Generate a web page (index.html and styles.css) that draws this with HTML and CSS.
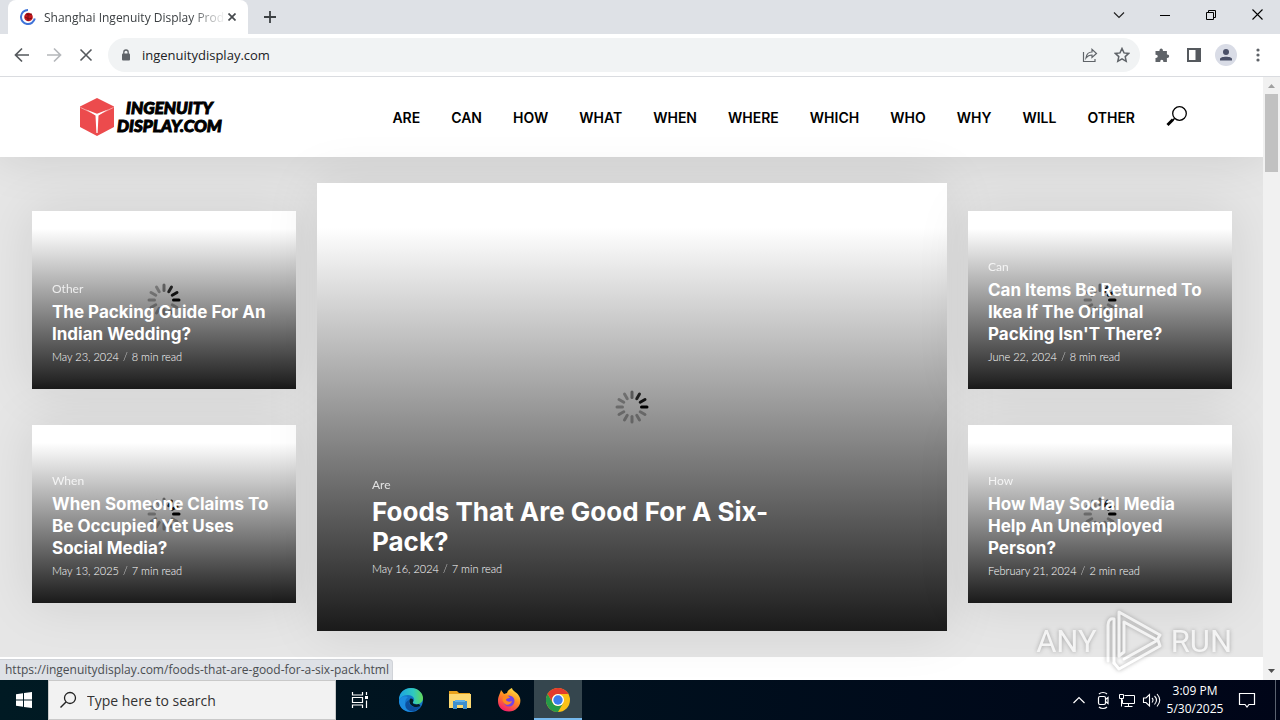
FILE: index.html
```
<!DOCTYPE html>
<html lang="en">
<head>
  <meta charset="UTF-8" />
  <meta name="viewport" content="width=device-width, initial-scale=1.0" />
  <title>Shanghai Ingenuity Display Products</title>
  <link rel="stylesheet" href="styles.css">
</head>
<body>
  <svg class="defs" aria-hidden="true">
    <symbol id="spinner" viewBox="-17 -17 34 34">
      <g stroke="#000" stroke-width="3" stroke-linecap="round">
        <path d="M9.500 0H15" />
        <path d="M9.500 0H15" transform="rotate(-30)" opacity=".9" />
        <path d="M9.500 0H15" transform="rotate(-60)" opacity=".8" />
        <path d="M9.500 0H15" transform="rotate(-90)" opacity=".45" />
        <g opacity=".3">
          <path d="M9.500 0H15" transform="rotate(-120)" />
          <path d="M9.500 0H15" transform="rotate(-150)" />
          <path d="M9.500 0H15" transform="rotate(180)" />
          <path d="M9.500 0H15" transform="rotate(150)" />
          <path d="M9.500 0H15" transform="rotate(120)" />
          <path d="M9.500 0H15" transform="rotate(90)" />
          <path d="M9.500 0H15" transform="rotate(60)" />
          <path d="M9.500 0H15" transform="rotate(30)" />
        </g>
      </g>
    </symbol>
  </svg>

  <div class="tabstrip">
    <div class="tab">
      <svg width="16" height="16" viewBox="0 0 16 16"><circle cx="8.500" cy="8" r="4.300" fill="#c4161c" /><path d="M6 5l3 1 3-1M5 8l4 2 3-1M8 4v8" stroke="#7a0d14" fill="none" /><path d="M8 1a7 7 0 1 0 6.800 8.600" fill="none" stroke="#3f73d8" stroke-width="2" /></svg>
      <span class="tab-title">Shanghai Ingenuity Display Prod</span>
      <button class="tab-close" aria-label="Close tab"><svg width="8" height="8" viewBox="0 0 8 8"><path d="M.500.500l7 7M7.500.500l-7 7" stroke="#45494d" stroke-width="1.700" /></svg></button>
    </div>
    <button class="new-tab" aria-label="New tab"><svg width="12" height="12" viewBox="0 0 12 12"><path d="M6 0v12M0 6h12" stroke="#3c4043" stroke-width="1.800" /></svg></button>
    <div class="win-buttons">
      <button aria-label="Search tabs"><svg width="12" height="8" viewBox="0 0 12 8"><path d="M1 1.500l5 5 5-5" fill="none" stroke="#222" stroke-width="1.200" /></svg></button>
      <button aria-label="Minimize"><svg width="10" height="10" viewBox="0 0 10 10"><path d="M0 5.500h10" stroke="#000" /></svg></button>
      <button aria-label="Restore"><svg width="10" height="10" viewBox="0 0 10 10"><path d="M.500 2.500h7v7h-7zM2.500 2.500v-2h7v7h-2" fill="none" stroke="#000" /></svg></button>
      <button aria-label="Close"><svg width="11" height="11" viewBox="0 0 11 11"><path d="M.500.500l10 10M10.500.500l-10 10" stroke="#000" stroke-width="1.100" /></svg></button>
    </div>
  </div>

  <div class="toolbar">
    <button aria-label="Back"><svg width="16" height="16" viewBox="0 0 16 16"><path d="M15 8H2M8 1.500L1.500 8 8 14.500" fill="none" stroke="#55595d" stroke-width="1.700" /></svg></button>
    <button aria-label="Forward"><svg width="16" height="16" viewBox="0 0 16 16"><path d="M1 8h13M8 1.500L14.500 8 8 14.500" fill="none" stroke="#b5b8bb" stroke-width="1.700" /></svg></button>
    <button aria-label="Stop"><svg width="14" height="14" viewBox="0 0 14 14"><path d="M1.500 1.500l11 11M12.500 1.500l-11 11" stroke="#55595d" stroke-width="1.600" /></svg></button>
    <div class="omnibox">
      <svg width="10" height="12" viewBox="0 0 10 12"><rect x="1" y="4.500" width="8" height="7" rx="1" fill="#5f6368" /><path d="M2.800 5V3.200a2.200 2.200 0 0 1 4.400 0V5" fill="none" stroke="#5f6368" stroke-width="1.300" /></svg>
      <input type="text" value="ingenuitydisplay.com" aria-label="Address" />
      <button aria-label="Share"><svg width="16" height="16" viewBox="0 0 16 16"><path d="M1.500 5v9.500h11.500v-2.500M4 11c.500-4 3-6 6-6V2.300L14.500 6.500 10 10.500V8c-2.500 0-4.500 1-6 3z" fill="none" stroke="#5f6368" stroke-width="1.200" /></svg></button>
      <button aria-label="Bookmark"><svg width="16" height="16" viewBox="0 0 16 16"><path d="M8 1.500l2 4.400 4.700.500-3.500 3.200 1 4.700L8 11.900l-4.200 2.400 1-4.700L1.300 6.400l4.700-.500z" fill="none" stroke="#5f6368" stroke-width="1.500" /></svg></button>
    </div>
    <button aria-label="Extensions"><svg width="16" height="16" viewBox="0 0 16 16"><path d="M1.500 4h4c-.600-3.500 4-3.500 3.400 0h4v3.600c3-.400 3 3.800 0 3.400v4H9.300c.500-3-3.500-3-3 0H1.500v-4c3 .300 3-3.600 0-3.200z" fill="#5f6368" /></svg></button>
    <button aria-label="Side panel"><svg width="14" height="14" viewBox="0 0 14 14"><path d="M0 0h14v14H0zM2 2v10h6.500V2z" fill="#55595e" fill-rule="evenodd" /></svg></button>
    <button aria-label="Profile"><svg width="22" height="22" viewBox="0 0 22 22"><circle cx="11" cy="11" r="11" fill="#d9dce6" /><circle cx="11" cy="8" r="3" fill="#4a5068" /><path d="M5 16.500v-1.500c0-3 12-3 12 0v1.500z" fill="#4a5068" /></svg></button>
    <button aria-label="Menu"><svg width="4" height="14" viewBox="0 0 4 14"><g fill="#5f6368"><circle cx="2" cy="2" r="1.600" /><circle cx="2" cy="7" r="1.600" /><circle cx="2" cy="12" r="1.600" /></g></svg></button>
  </div>

  <div class="viewport">
    <div class="page">
      <header class="site-header">
        <a class="logo" href="#">
          <svg width="34" height="38" viewBox="0 0 34 38"><path d="M17 0l17 8.500v20.500L17 38 0 29V8.500z" fill="#ec4b4d" /><path d="M.500 9.500L17 17.300 33.500 9.500" fill="none" stroke="#f7a3a3" /><path d="M6 11.500l11 4.300 11-4.300-9.500 6L17.600 35h-1.200L15.500 17.500z" fill="#fff" /></svg>
          <span class="logo-text"><span>INGENUITY</span><span>DISPLAY.COM</span></span>
        </a>
        <nav class="menu">
          <a href="#">ARE</a>
          <a href="#">CAN</a>
          <a href="#">HOW</a>
          <a href="#">WHAT</a>
          <a href="#">WHEN</a>
          <a href="#">WHERE</a>
          <a href="#">WHICH</a>
          <a href="#">WHO</a>
          <a href="#">WHY</a>
          <a href="#">WILL</a>
          <a href="#">OTHER</a>
        </nav>
        <button class="search-btn" aria-label="Search"><svg width="22" height="22" viewBox="0 0 22 22"><circle cx="13.500" cy="7.500" r="6.800" fill="none" stroke="#000" stroke-width="1.300" /><path d="M8.500 12.500L7 14" stroke="#000" stroke-width="1.400" /><path d="M7 13.500L1.500 19" stroke="#000" stroke-width="3" /></svg></button>
      </header>

      <section class="hero">
        <div class="column">
          <article class="card">
            <svg class="spinner"><use href="#spinner" /></svg>
            <a class="category" href="#">Other</a>
            <h2><a href="#">The Packing Guide For An Indian Wedding?</a></h2>
            <p class="meta">May 23, 2024<i>/</i>8 min read</p>
          </article>
          <article class="card">
            <svg class="spinner"><use href="#spinner" /></svg>
            <a class="category" href="#">When</a>
            <h2><a href="#">When Someone Claims To Be Occupied Yet Uses Social Media?</a></h2>
            <p class="meta">May 13, 2025<i>/</i>7 min read</p>
          </article>
        </div>
        <article class="card card-big">
          <svg class="spinner"><use href="#spinner" /></svg>
          <a class="category" href="#">Are</a>
          <h2><a href="#">Foods That Are Good For A Six-Pack?</a></h2>
          <p class="meta">May 16, 2024<i>/</i>7 min read</p>
        </article>
        <div class="column">
          <article class="card">
            <svg class="spinner"><use href="#spinner" /></svg>
            <a class="category" href="#">Can</a>
            <h2><a href="#">Can Items Be Returned To Ikea If The Original Packing Isn'T There?</a></h2>
            <p class="meta">June 22, 2024<i>/</i>8 min read</p>
          </article>
          <article class="card">
            <svg class="spinner"><use href="#spinner" /></svg>
            <a class="category" href="#">How</a>
            <h2><a href="#">How May Social Media Help An Unemployed Person?</a></h2>
            <p class="meta">February 21, 2024<i>/</i>2 min read</p>
          </article>
        </div>
      </section>
    </div>

    <div class="scrollbar">
      <svg width="7" height="4" viewBox="0 0 7 4"><path d="M0 4l3.500-4L7 4z" fill="#a0a0a0" /></svg>
      <div class="thumb"></div>
      <svg width="7" height="4" viewBox="0 0 7 4"><path d="M0 0l3.500 4L7 0z" fill="#505050" /></svg>
    </div>

    <div class="status">https://ingenuitydisplay.com/foods-that-are-good-for-a-six-pack.html</div>
    <div class="watermark">
      <span>ANY</span>
      <svg width="56" height="62" viewBox="0 0 56 62"><g fill="none" stroke="#fff" stroke-width="3" stroke-linejoin="round" stroke-linecap="round"><path d="M2 51V15c0-5 3-7 6-6v44" /><path d="M13 2l41 23-3 5-33-18v30l-5 4z" /><path d="M8 53l5 6 41-23-2-6-34 19" /></g></svg>
      <span>RUN</span>
    </div>
  </div>

  <footer class="taskbar">
    <button class="start" aria-label="Start"><svg width="16" height="16" viewBox="0 0 16 16"><path d="M0 2.300L7 1.200v6.300H0zM8 1l8-1v7.500H8zM0 8.500h7v6.300l-7-1zM8 8.500h8V16l-8-1.100z" fill="#fff" /></svg></button>
    <label class="search">
      <svg width="18" height="18" viewBox="0 0 18 18"><circle cx="11" cy="7" r="5.500" fill="none" stroke="#222" stroke-width="1.300" /><path d="M7 11l-5.500 5.500" stroke="#222" stroke-width="1.500" /></svg>
      <input type="text" placeholder="Type here to search" aria-label="Type here to search" />
    </label>
    <div class="apps">
      <button aria-label="Task view"><svg width="18" height="16" viewBox="0 0 18 16"><path d="M1.500 0v3h10V0M1.500 16v-3h10v3M1.500 5.500h10v5h-10zM15.500 0v3M15.500 8.500V16" fill="none" stroke="#fff" stroke-width="1.200" /><path d="M14 4h3v3h-3z" fill="#fff" /></svg></button>
      <button aria-label="Edge"><svg width="24" height="24" viewBox="0 0 24 24"><defs><linearGradient id="edge-top" x1="0" y1=".5" x2="1" y2=".5"><stop offset="0" stop-color="#1ba1e2" /><stop offset=".6" stop-color="#2fc9c0" /><stop offset="1" stop-color="#63d957" /></linearGradient></defs><circle cx="12" cy="12" r="12" fill="#1273c9" /><path d="M0 12C0 4 6 0 12 0c7 0 12 5 12 10 0 4-3 6-6 6s-5-1-4-2c3-3 0-7-5-7-5 0-8 3-9 5z" fill="url(#edge-top)" /><path d="M9 9c-6 5-2 13 5 14.500C5 25 0 19 0 13c1-4 5-6 9-4z" fill="#1b8ce0" /><path d="M10 12c-1 5 4 9 12 6-3 4-7 6-11 5-6-2-6-9-1-11z" fill="#0c4f9e" /><path d="M12 10.500c2 0 3 2 2 3.500-1 2 3 3 6 2l1.500 2c-6 3-12-1-11-6 .200-.800.800-1.500 1.500-1.500z" fill="#031b26" /></svg></button>
      <button aria-label="File Explorer"><svg width="22" height="20" viewBox="0 0 22 20"><path d="M0 1h8l2 2h11v4H0z" fill="#e8a21c" /><path d="M0 4h22v14H0z" fill="#fcd871" /><path d="M4 11h14v8h-4v-4H8v4H4z" fill="#3f8fce" /><path d="M6 10h10v2H6z" fill="#63b2e8" /></svg></button>
      <button aria-label="Firefox"><svg width="24" height="24" viewBox="0 0 24 24"><defs><linearGradient id="fox" x1=".8" y1="0" x2=".3" y2="1"><stop offset="0" stop-color="#ffe84a" /><stop offset=".45" stop-color="#ff9020" /><stop offset="1" stop-color="#f5196c" /></linearGradient></defs><path d="M1 13C1 8 3 6 4 2l3 4 3-1c1-3 3-4 5-5 0 3 6 4 8 10 2 7-4 13.500-11 13.500S1 19 1 13z" fill="url(#fox)" /><circle cx="12" cy="13" r="5.500" fill="#7542e5" /><path d="M7 8c3-1 5 0 6 2-3 0-4 1-4 2 1 2 4 2 6 1-1 4-6 5-8 2-2-2-2-5 0-7z" fill="#ff8a1e" /></svg></button>
      <button class="active" aria-label="Chrome"><svg width="24" height="24" viewBox="0 0 24 24"><circle cx="12" cy="12" r="12" fill="#fbc116" /><path d="M1.600 6A12 12 0 0 1 22.400 6H12a6 6 0 0 0-5.200 9z" fill="#e33b2e" /><path d="M1.600 6A12 12 0 0 0 12 24l5.200-9a6 6 0 0 1-10.400 0z" fill="#269a48" /><circle cx="12" cy="12" r="6" fill="#fff" /><circle cx="12" cy="12" r="4.700" fill="#3b7ded" /></svg></button>
    </div>
    <div class="tray">
      <svg width="24" height="24" viewBox="0 0 24 24"><path d="M6.500 15L12 9.500l5.500 5.500" fill="none" stroke="#fff" stroke-width="1.200" /></svg>
      <svg width="24" height="24" viewBox="0 0 24 24"><g fill="none" stroke="#fff" stroke-width="1.200"><rect x="7.500" y="8.500" width="7" height="8" rx="1.500" /><path d="M14.500 11.500l2.500-2v6l-2.500-2M8 6c2-2 6-2 8 0M8 19c2 2 6 2 8 0" /></g></svg>
      <svg width="24" height="24" viewBox="0 0 24 24"><path d="M9.500 7.500h10v8h-12v-4M13.500 15.500v3M9.500 18.500h8M4.500 6.500h4v4h-4zM6.500 10.500v8" fill="none" stroke="#fff" /></svg>
      <svg width="24" height="24" viewBox="0 0 24 24"><path d="M4.500 10v4.500h2.500l3.500 3.500V6.500L7 10zM13 10q2 2 0 4.500M15.500 8q4 4 0 8.500M18 6q5.500 6 0 12.500" fill="none" stroke="#fff" stroke-width="1.100" /></svg>
      <div class="clock">3:09 PM<br>5/30/2025</div>
      <button class="notify" aria-label="Notifications"><svg width="18" height="18" viewBox="0 0 18 18"><path d="M1.500 2.500h15v11H11L9 16l-2-2.500H1.500z" fill="none" stroke="#fff" stroke-width="1.200" /></svg></button>
    </div>
  </footer>
</body>
</html>
```
FILE: styles.css
```
* { box-sizing: border-box; }
body { margin: 0; height: 100vh; display: flex; flex-direction: column; overflow: hidden; background: #fff; font-family: "Open Sans", "Noto Sans", sans-serif; font-size: 12px; color: #000; }
a { color: inherit; text-decoration: none; }
button { display: flex; align-items: center; justify-content: center; padding: 0; border: none; background: none; cursor: pointer; }
input { border: none; outline: none; background: none; padding: 0; font-family: inherit; min-width: 0; }
svg { display: block; flex: none; }
.defs { position: absolute; width: 0; height: 0; }

/* browser */
.tabstrip { flex: none; height: 34px; display: flex; align-items: stretch; background: #dee1e6; padding-left: 8px; }
.tab { width: 240px; display: flex; align-items: center; padding: 0 10px 0 12px; background: #fff; border-radius: 8px 8px 0 0; }
.tab-title { flex: 1; margin-left: 8px; white-space: nowrap; color: #3c4043; -webkit-mask-image: linear-gradient(to right, #000 80%, transparent); mask-image: linear-gradient(to right, #000 80%, transparent); }
.tab-close { width: 12px; }
.new-tab { width: 28px; margin-left: 8px; }
.win-buttons { display: flex; margin-left: auto; padding-bottom: 5px; }
.win-buttons button { width: 46px; }
.toolbar { flex: none; height: 43px; display: flex; align-items: center; padding: 0 6px; border-bottom: 1px solid #dadce0; }
.toolbar button { width: 32px; height: 32px; }
.omnibox { flex: 1; height: 34px; margin: 0 6px; padding: 0 2px 0 13px; display: flex; align-items: center; background: #f1f3f4; border-radius: 17px; }
.omnibox input { flex: 1; margin-left: 11px; font-size: 13px; color: #202124; }

.viewport { flex: 1; min-height: 0; display: flex; position: relative; }
.page { flex: 1; overflow: hidden; }
.scrollbar { width: 17px; display: flex; flex-direction: column; align-items: center; padding: 7px 0; background: #f1f1f1; }
.thumb { width: 13px; height: 78px; margin: 6px 0 auto; background: #c1c1c1; }
.status { position: absolute; left: 0; bottom: 0; height: 21px; padding: 0 3px 0 5px; line-height: 20px; color: #4a4d51; background: #dee1e6; border: 1px solid #d0d3d8; border-left: none; border-bottom: none; border-radius: 0 4px 0 0; }
.watermark { position: absolute; right: 48px; bottom: 8px; display: flex; align-items: center; gap: 9px; font-family: Roboto, sans-serif; font-size: 31px; color: #fff; opacity: .6; filter: drop-shadow(0 0 2px #777); }

/* site */
.site-header { position: relative; height: 80px; display: flex; align-items: center; padding: 0 75px 0 80px; background: #fff; box-shadow: 0 0 50px rgba(0,0,0,.12); }
.logo { display: flex; align-items: center; gap: 3px; margin-right: auto; }
.logo-text { display: flex; flex-direction: column; align-items: center; font-family: Lato, sans-serif; font-size: 17px; font-weight: 900; font-style: italic; line-height: 18px; -webkit-text-stroke: 1px #000; }
.menu { display: flex; gap: 31px; font-family: Inter, sans-serif; font-size: 14px; font-weight: 600; }
.search-btn { margin-left: 31px; }
.hero { display: grid; grid-template-columns: 264fr 630fr 264fr; column-gap: 21px; align-items: center; padding: 26px 31px 26px 32px; background: #e6e6e6; }
.column { display: grid; gap: 36px; }
.card { position: relative; min-height: 178px; display: flex; flex-direction: column; justify-content: flex-end; align-items: flex-start; padding: 0 20px 24px; color: #fff; background: linear-gradient(to bottom, #fff 10%, #1a1a1a); box-shadow: 0 0 50px rgba(0,0,0,.1); }
.card > * { position: relative; }
.card .spinner { position: absolute; left: calc(50% - 17px); top: calc(50% - 17px); width: 34px; height: 34px; }
.category { margin-bottom: 4px; font-family: Lato, sans-serif; font-size: 12px; line-height: 16px; opacity: .8; }
.card h2 { margin: 0 0 4px; font-family: Inter, sans-serif; font-size: 17px; font-weight: 700; line-height: 22px; }
.meta { margin: 0; font-family: Lato, sans-serif; font-size: 11px; font-weight: 300; line-height: 16px; }
.meta i { margin: 0 4px; font-style: normal; opacity: .7; }
.card-big { min-height: 448px; padding: 0 55px 54px; }
.card-big h2 { max-width: 440px; font-size: 26px; line-height: 30px; }

/* taskbar */
.taskbar { flex: none; height: 40px; display: flex; align-items: stretch; background: linear-gradient(to right, #001a23, #000518); color: #fff; }
.start { width: 48px; }
.search { width: 288px; display: flex; align-items: center; padding-left: 10px; background: #f2f2f2; border: 1px solid #c9c9c9; }
.search input { flex: 1; margin-left: 10px; font-size: 14px; color: #222; }
.search input::placeholder { color: #333; opacity: 1; }
.apps { display: flex; gap: 1px; }
.apps button { width: 48px; }
.apps button:first-child { margin-right: 2px; }
.apps .active { background: #35464e; border-bottom: 2px solid #76b9ed; padding-top: 2px; }
.tray { display: flex; align-items: center; margin-left: auto; margin-right: 4px; padding-right: 8px; border-right: 1px solid #5b6270; }
.clock { width: 64px; text-align: center; line-height: 18px; }
.notify { width: 40px; height: 40px; }
```
